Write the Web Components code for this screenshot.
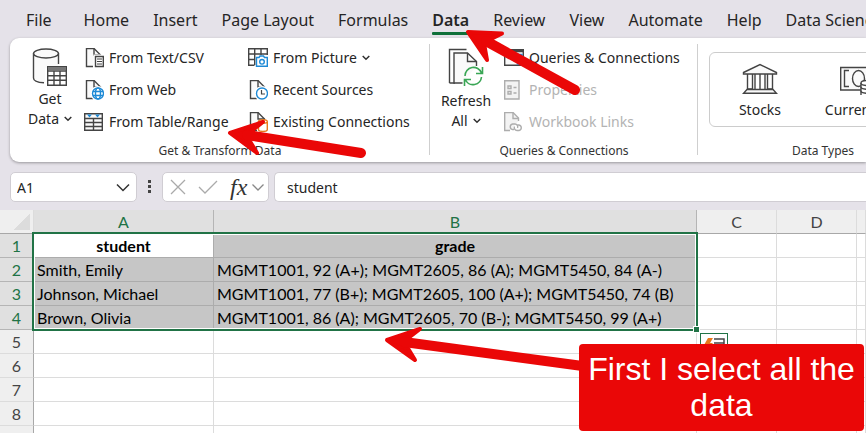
<!DOCTYPE html>
<html lang="en">
<head>
<meta charset="utf-8">
<title>Workbook</title>
<style>
html,body{margin:0;height:100%;overflow:hidden}
body{font-family:"Noto Sans","Open Sans",sans-serif;color:#252525;background:#e5e2e9}
</style>
</head>
<body>
<xl-app>
  <xl-tabs slot="tabs">
    <xl-tab>File</xl-tab><xl-tab>Home</xl-tab><xl-tab>Insert</xl-tab><xl-tab>Page Layout</xl-tab><xl-tab>Formulas</xl-tab><xl-tab active>Data</xl-tab><xl-tab>Review</xl-tab><xl-tab>View</xl-tab><xl-tab>Automate</xl-tab><xl-tab>Help</xl-tab><xl-tab>Data Science</xl-tab>
  </xl-tabs>
  <xl-ribbon slot="ribbon">
    <xl-group label="Get &amp; Transform Data" class="get">
      <xl-large icon="database" menu="Data">Get</xl-large>
      <xl-stack>
        <xl-item icon="text">From Text/CSV</xl-item>
        <xl-item icon="web">From Web</xl-item>
        <xl-item icon="table">From Table/Range</xl-item>
      </xl-stack>
      <xl-stack>
        <xl-item icon="picture" menu>From Picture</xl-item>
        <xl-item icon="recent">Recent Sources</xl-item>
        <xl-item icon="existing">Existing Connections</xl-item>
      </xl-stack>
    </xl-group>
    <xl-group label="Queries &amp; Connections" class="queries">
      <xl-large icon="refresh" menu="All">Refresh</xl-large>
      <xl-stack>
        <xl-item icon="queries">Queries &amp; Connections</xl-item>
        <xl-item icon="properties" disabled>Properties</xl-item>
        <xl-item icon="links" disabled>Workbook Links</xl-item>
      </xl-stack>
    </xl-group>
    <xl-group label="Data Types" class="types">
      <xl-gallery>
        <xl-type icon="stocks">Stocks</xl-type>
        <xl-type icon="currency">Currencies</xl-type>
      </xl-gallery>
    </xl-group>
  </xl-ribbon>
  <xl-formula-bar slot="formula" cell="A1" value="student"></xl-formula-bar>
  <xl-sheet slot="sheet"></xl-sheet>
  <note-arrows slot="notes"></note-arrows>
  <note-callout slot="notes">First I select all the data</note-callout>
</xl-app>
<script>
const page='<path d="M9 18.500H2.500V.5H10L16.500 7V9" fill="#fafafa"/><path d="M10 .5V7H16.500"/>';
const svg=(w,h,body,color='#444')=>`<svg width="${w}" height="${h}" viewBox="0 0 ${w} ${h}" fill="none" stroke="${color}" stroke-width="1.4" aria-hidden="true">${body}</svg>`;
const chevron='<svg width="8" height="6" viewBox="0 0 8 6" fill="none" stroke="#333" stroke-width="1.5" aria-hidden="true"><path d="M.7 1L4 4.300 7.300 1"/></svg>';
const icons={
database:svg(36,38,'<path d="M1.700 5V30C1.700 33 7 34.800 13 34.800V20H26.500V5" fill="#fafafa" stroke="none"/><ellipse cx="14" cy="5.500" rx="12.500" ry="4.500" fill="#fafafa"/><path d="M1.500 5.500V30C1.500 33 6 34.500 12 34.700M26.500 5.500V16"/><path d="M15.700 18.700H34.300V37.300H15.700Z" fill="#fff"/><path d="M16 20.500H34" stroke="#777" stroke-width="3"/><path d="M16 23H34M16 27.700H34M16 32.300H34M22 23V37M28 23V37"/>'),
text:svg(20,20,page+'<path d="M9.500 6.500H19.300V19H9.500Z" fill="#fff" stroke="none"/><path d="M11.500 8.500H19.300V18.500H11.500Z" fill="#fff"/><path d="M13 11H18M13 13.500H18M13 16H18" stroke-width="1"/>'),
web:svg(20,20,page+'<circle cx="14" cy="13.500" r="7.500" fill="#fff" stroke="none"/><g stroke="#1e8ad6"><circle cx="14" cy="13.500" r="5.500" fill="#fff"/><ellipse cx="14" cy="13.500" rx="2.500" ry="5.500"/><path d="M9 11.500H19M9 15.500H19"/></g>'),
table:svg(20,20,'<path d="M.7 1.700H18.300V18.300H.7Z" fill="#fafafa"/><path d="M.7 6.500H18.300M.7 10.500H18.300M.7 14.500H18.300M9.500 6.500V18"/><path d="M3 2.500H8L5.500 5.500ZM11 2.500H16L13.500 5.500Z" fill="#1e8ad6" stroke="none"/>'),
picture:svg(20,20,'<path d="M6.500 17.300H.7V.7H19.300V7M.7 6H19.300M.7 11.500H7M6.700 .7V17M13 .7V7"/><path d="M8.500 9.500H11L12 8H15.500L16.500 9.500H19.300V18.300H8.500Z" stroke="#1e8ad6" fill="#fff"/><circle cx="14" cy="13.800" r="2.300" stroke="#1e8ad6"/>'),
recent:svg(20,20,page+'<circle cx="14" cy="13.500" r="7.500" fill="#fff" stroke="none"/><circle cx="14" cy="13.500" r="5.500" stroke="#1e8ad6" fill="#fff"/><path d="M13.500 10V14H17" stroke-width="1.200"/>'),
existing:svg(20,20,page+'<path d="M10.500 9.500V17.500C10.500 20 19.300 20 19.300 17.500V9.500" fill="#fff" stroke="#e8791c"/><ellipse cx="14.900" cy="9.500" rx="4.400" ry="1.800" fill="#fff" stroke="#e8791c"/>'),
queries:svg(20,20,'<path d="M.7 1.700H19.300V17.300H.7Z" fill="#fafafa"/><path d="M1 3H19" stroke-width="2.500"/><path d="M13.500 6.500H18V16H13.500Z" stroke="#1e8ad6" fill="#d9edfb"/>'),
properties:svg(20,20,'<path d="M.7 .7H15V19H.7Z" fill="#f3f3f3"/><path d="M4 6H7V8.500H4ZM4 11.500H7V14H4ZM9.500 7.500H12.500M9.500 13H12.500"/>','#adadad'),
links:svg(20,20,'<path d="M6 18.500H.7V.5H9L14.500 6V9" fill="#f3f3f3"/><path d="M9 .5V6.500H14.500"/><path d="M10 17.500H8.500a2.800 2.800 0 0 1 0-5.500H11a2.800 2.800 0 0 1 2.500 4M13 13H15a2.800 2.800 0 0 1 0 5.500H13a2.800 2.800 0 0 1-2.500-4"/>','#adadad'),
refresh:svg(36,40,'<path d="M1.500 35V1.500H18.500M7 35H1.500"/><path d="M14.500 35H6V5H19.500L28.500 13.500V18" fill="#fafafa"/><path d="M19.500 5V13.500H28.500"/><path d="M17 28a8.500 8.500 0 0 1 16.500-3M33.500 29a8.500 8.500 0 0 1-16 3M34.500 19V25.500H28M16.500 38V31.500H23" stroke="#3aa655" stroke-width="1.600"/>'),
stocks:svg(36,32,'<path d="M1.500 9.500L18 1.500 34.500 9.500V11H1.500Z" fill="#fafafa"/><path d="M5.500 11V26H10.500V11M13 11V26M18 11V26M23 11V26M25.500 11V26H30.500V11"/><path d="M5 26.500H31L34.500 30.300H1.500Z" fill="#fafafa"/>'),
currency:svg(40,32,'<path d="M.7 4.500H38V27H.7Z" fill="#fafafa"/><path d="M9 7.500H4.500V23.500H9M30 7.500H34V15"/><ellipse cx="18.500" cy="15.500" rx="6" ry="8"/><path d="M21 20V32C21 35 34 35 34 32V20" fill="#fff"/><ellipse cx="27.500" cy="20" rx="6.500" ry="2.500" fill="#fff"/><path d="M21 24C21 27 34 27 34 24M21 28C21 31 34 31 34 28"/>')
};
const reset='*,:host{box-sizing:border-box}button,input{font:inherit;color:inherit;background:none;border:0;padding:0;margin:0;white-space:nowrap}svg{display:block;flex:none}';
const define=(name,render)=>customElements.define(name,class extends HTMLElement{
  connectedCallback(){
    if(this.shadowRoot)return;
    this.attachShadow({mode:'open'}).innerHTML='<style>'+reset+render.css+'</style>'+render.html(this);
  }
});

define('xl-app',{css:`:host{display:flex;flex-direction:column;position:relative;height:100vh;overflow:hidden}`,
html:()=>'<slot name="tabs"></slot><slot name="ribbon"></slot><slot name="formula"></slot><slot name="sheet"></slot><slot name="notes"></slot>'});

define('xl-tabs',{css:`:host{display:block;flex:none}nav{display:flex;gap:24px;height:38px;padding-left:26px}::slotted(:first-child){margin-right:8px}`,
html:()=>'<nav aria-label="Ribbon tabs"><slot></slot></nav>'});

define('xl-tab',{css:`:host{display:flex;flex:none;font-size:16px;line-height:24px}button{display:flex;flex-direction:column;padding-top:8px}:host([active]){font-weight:600}:host([active]) button::after{content:"";align-self:stretch;height:3px;border-radius:1px;background:#10703a}`,
html:()=>'<button type="button"><slot></slot></button>'});

define('xl-ribbon',{css:`:host{display:flex;flex:none;margin-left:10px;padding-top:4px;background:#fff;border-radius:9px 0 0 9px;box-shadow:0 1px 3px #0005;overflow:clip;overflow-clip-margin:4px}
::slotted(.get){width:420px}::slotted(.queries){width:268px}::slotted(.types){width:250px}::slotted(.get){--inset:8px}`,
html:()=>'<slot></slot>'});

define('xl-group',{css:`:host{display:flex;flex-direction:column;flex:none;position:relative;background:linear-gradient(#cfcfcf,#cfcfcf) right 2px/1px 111px no-repeat}
.body{display:flex;height:96px}.label{height:24px;font-size:12px;line-height:26px;text-align:center;color:#333}`,
html:e=>`<div class="body"><slot></slot></div><div class="label">${e.getAttribute('label').replace('&','&amp;')}</div>`});

define('xl-large',{css:`:host{display:block;flex:none;width:72px;font-size:14px;line-height:20px}button{display:flex;flex-direction:column;align-items:center;width:100%;padding:6px 0 0 var(--inset,0)}
svg{margin-bottom:3px}.menu{display:flex;align-items:center;gap:5px}.menu svg{margin:0}`,
html:e=>`<button type="button">${icons[e.getAttribute('icon')]}<span><slot></slot></span><span class="menu">${e.getAttribute('menu')}${chevron}</span></button>`});

define('xl-stack',{css:`:host{display:flex;flex-direction:column;flex:none;width:164px;padding-left:2px}`,html:()=>'<slot></slot>'});

define('xl-item',{css:`:host{display:flex;height:32px;font-size:14px;line-height:20px}button{display:flex;align-items:center;gap:5px}:host([disabled]) button{color:#b3b3b3}`,
html:e=>`<button type="button"${e.hasAttribute('disabled')?' disabled':''}>${icons[e.getAttribute('icon')]}<span><slot></slot></span>${e.hasAttribute('menu')?chevron:''}</button>`});

define('xl-gallery',{css:`:host{display:flex;width:100%;height:75px;margin:10px 0 0 11px;border:1px solid #ccc;border-radius:6px}`,html:()=>'<slot></slot>'});

define('xl-type',{css:`:host{display:block;flex:none;width:100px;font-size:14px;line-height:20px}button{display:flex;flex-direction:column;align-items:center;gap:5px;width:100%;padding-top:10px}`,
html:e=>`<button type="button">${icons[e.getAttribute('icon')]}<span><slot></slot></span></button>`});

define('xl-formula-bar',{css:`:host{display:flex;flex:none;align-items:center;height:48px;padding:2px 0 0 10px;font-size:14px}
.box{display:flex;align-items:center;height:30px;background:#fff;border:1px solid #d0cdd3;border-radius:5px}
.name{width:127px;padding:0 6px}.name input{flex:1;min-width:0}.dots{width:25px;display:grid;place-items:center}
.fx{width:107px;padding:0 2px 0 7px;gap:12px}.fx button{display:flex;align-items:center}.insert{font:italic 24px/24px "Liberation Serif",serif;color:#333;gap:5px}
.value{flex:1;margin-left:5px;padding-left:12px;border-right:0;border-radius:5px 0 0 5px}.value input{width:100%}`,
html:e=>`<div class="box name"><input aria-label="Name box" value="${e.getAttribute('cell')}"><button type="button" aria-label="Names"><svg width="14" height="9" viewBox="0 0 14 9" fill="none" stroke="#333" stroke-width="1.500"><path d="M1 1.500L7 7.500 13 1.500"/></svg></button></div>
<div class="dots"><svg width="4" height="14" fill="#444"><path d="M0 0H3V3H0ZM0 5H3V8H0ZM0 10H3V13H0Z"/></svg></div>
<div class="box fx"><button type="button" aria-label="Cancel"><svg width="16" height="16" fill="none" stroke="#aaa" stroke-width="1.300"><path d="M1 1L15 15M15 1L1 15"/></svg></button><button type="button" aria-label="Enter"><svg width="20" height="16" fill="none" stroke="#aaa" stroke-width="1.300"><path d="M1 8L7 14 19 2"/></svg></button><button type="button" class="insert" aria-label="Insert function"><span>fx</span><svg width="12" height="9" fill="none" stroke="#888" stroke-width="1.300"><path d="M.5 1.500L6 7 11.500 1.500"/></svg></button></div>
<div class="box value"><input aria-label="Formula" value="${e.getAttribute('value')}"></div>`});

const rows=[['student','grade'],['Smith, Emily','MGMT1001, 92 (A+); MGMT2605, 86 (A); MGMT5450, 84 (A-)'],['Johnson, Michael','MGMT1001, 77 (B+); MGMT2605, 100 (A+); MGMT5450, 74 (B)'],['Brown, Olivia','MGMT1001, 86 (A); MGMT2605, 70 (B-); MGMT5450, 99 (A+)'],[],[],[],[],[]];
define('xl-sheet',{css:`:host{display:block;position:relative;flex:1;min-height:0;overflow:hidden;background:#fff;font:16px/22px Lato,"Noto Sans",sans-serif;color:#000}
table{width:100%;table-layout:fixed;border-collapse:separate;border-spacing:0}
th,td{height:24px;padding:1px 3px 0;border:solid #dcdcdc;border-width:0 1px 1px 0;white-space:nowrap;overflow:hidden;text-align:left}
thead th,tbody th{background:#efefef;color:#444;font-weight:400;text-align:center;padding:1px 0 0}
thead th{border-bottom-color:#a8a8a8}tbody th{border-right-color:#a8a8a8}
th.on{background:#e0e0e0;color:#217346;border-color:#b5b5b5}
td.on{background:#c6c6c6;border-color:#acacac}td.first{background:#fff}
.head td{font-weight:700;text-align:center}
.corner{background:linear-gradient(135deg,transparent 50%,#dcdcdc 50%) 14px 4px/16px 16px no-repeat #efefef!important}
.r{width:34px}.a{width:180px}.b{width:483px}.c{width:80px}
.sel{position:absolute;left:32px;top:22px;width:666px;height:99px;border:2px solid #217346;box-shadow:inset 0 0 0 1px #fff}
.sel::after{content:"";position:absolute;right:-3px;bottom:-3px;width:5px;height:5px;background:#217346;box-shadow:0 0 0 1px #fff}
.quick{position:absolute;left:700px;top:123px;width:28px;height:28px;border:1px solid #217346;background:#fff;padding:4px 3px}`,
html:()=>`<table><colgroup><col class="r"><col class="a"><col class="b"><col class="c"><col class="c"><col></colgroup><thead><tr><th class="corner"></th><th class="on">A</th><th class="on">B</th><th>C</th><th>D</th><th></th></tr></thead><tbody>${rows.map((r,i)=>`<tr class="${i?'':'head'}"><th class="${i<4?'on':''}">${i<8?i+1:''}</th>${[0,1,2,3,4].map(c=>`<td class="${i<4&&c<2?'on':''}${i+c?'':' first'}">${r[c]||''}</td>`).join('')}</tr>`).join('')}</tbody></table><div class="sel"></div>
<button type="button" class="quick" aria-label="Quick analysis"><svg width="21" height="18" fill="none"><path d="M4 0H9L6 5H9L1 13 3 7H0Z" fill="#e8791c"/><path d="M10 1H20V14H10M10 5H20M10 9H20" stroke="#444" stroke-width="1.500"/></svg></button>`});

define('note-arrows',{css:`:host{position:absolute;left:0;top:0;pointer-events:none}`,
html:()=>`<svg width="866" height="433" fill="#ea0707" stroke="#ea0707" stroke-width="4" stroke-linejoin="round" stroke-linecap="round" aria-hidden="true">
<path d="M468 32L502 33.500 491 39 484 43 487 60Z"/><path d="M486 41L575 90" stroke-width="10"/>
<path d="M230 133L263 122 250 132 248 138 257 153Z"/><path d="M247 135L361 153" stroke-width="10"/>
<path d="M387 340L420 329 407 339 406 345 415 360Z"/><path d="M404 342L590 367" stroke-width="10"/></svg>`});

define('note-callout',{css:`:host{position:absolute;right:2px;bottom:2px;width:285px;padding:7px 6px 8px;border-radius:4px;background:#ea0707;color:#fff;font:32px/36px "Liberation Sans",Arial,sans-serif;text-align:center}`,
html:()=>'<slot></slot>'});
</script>
</body>
</html>
